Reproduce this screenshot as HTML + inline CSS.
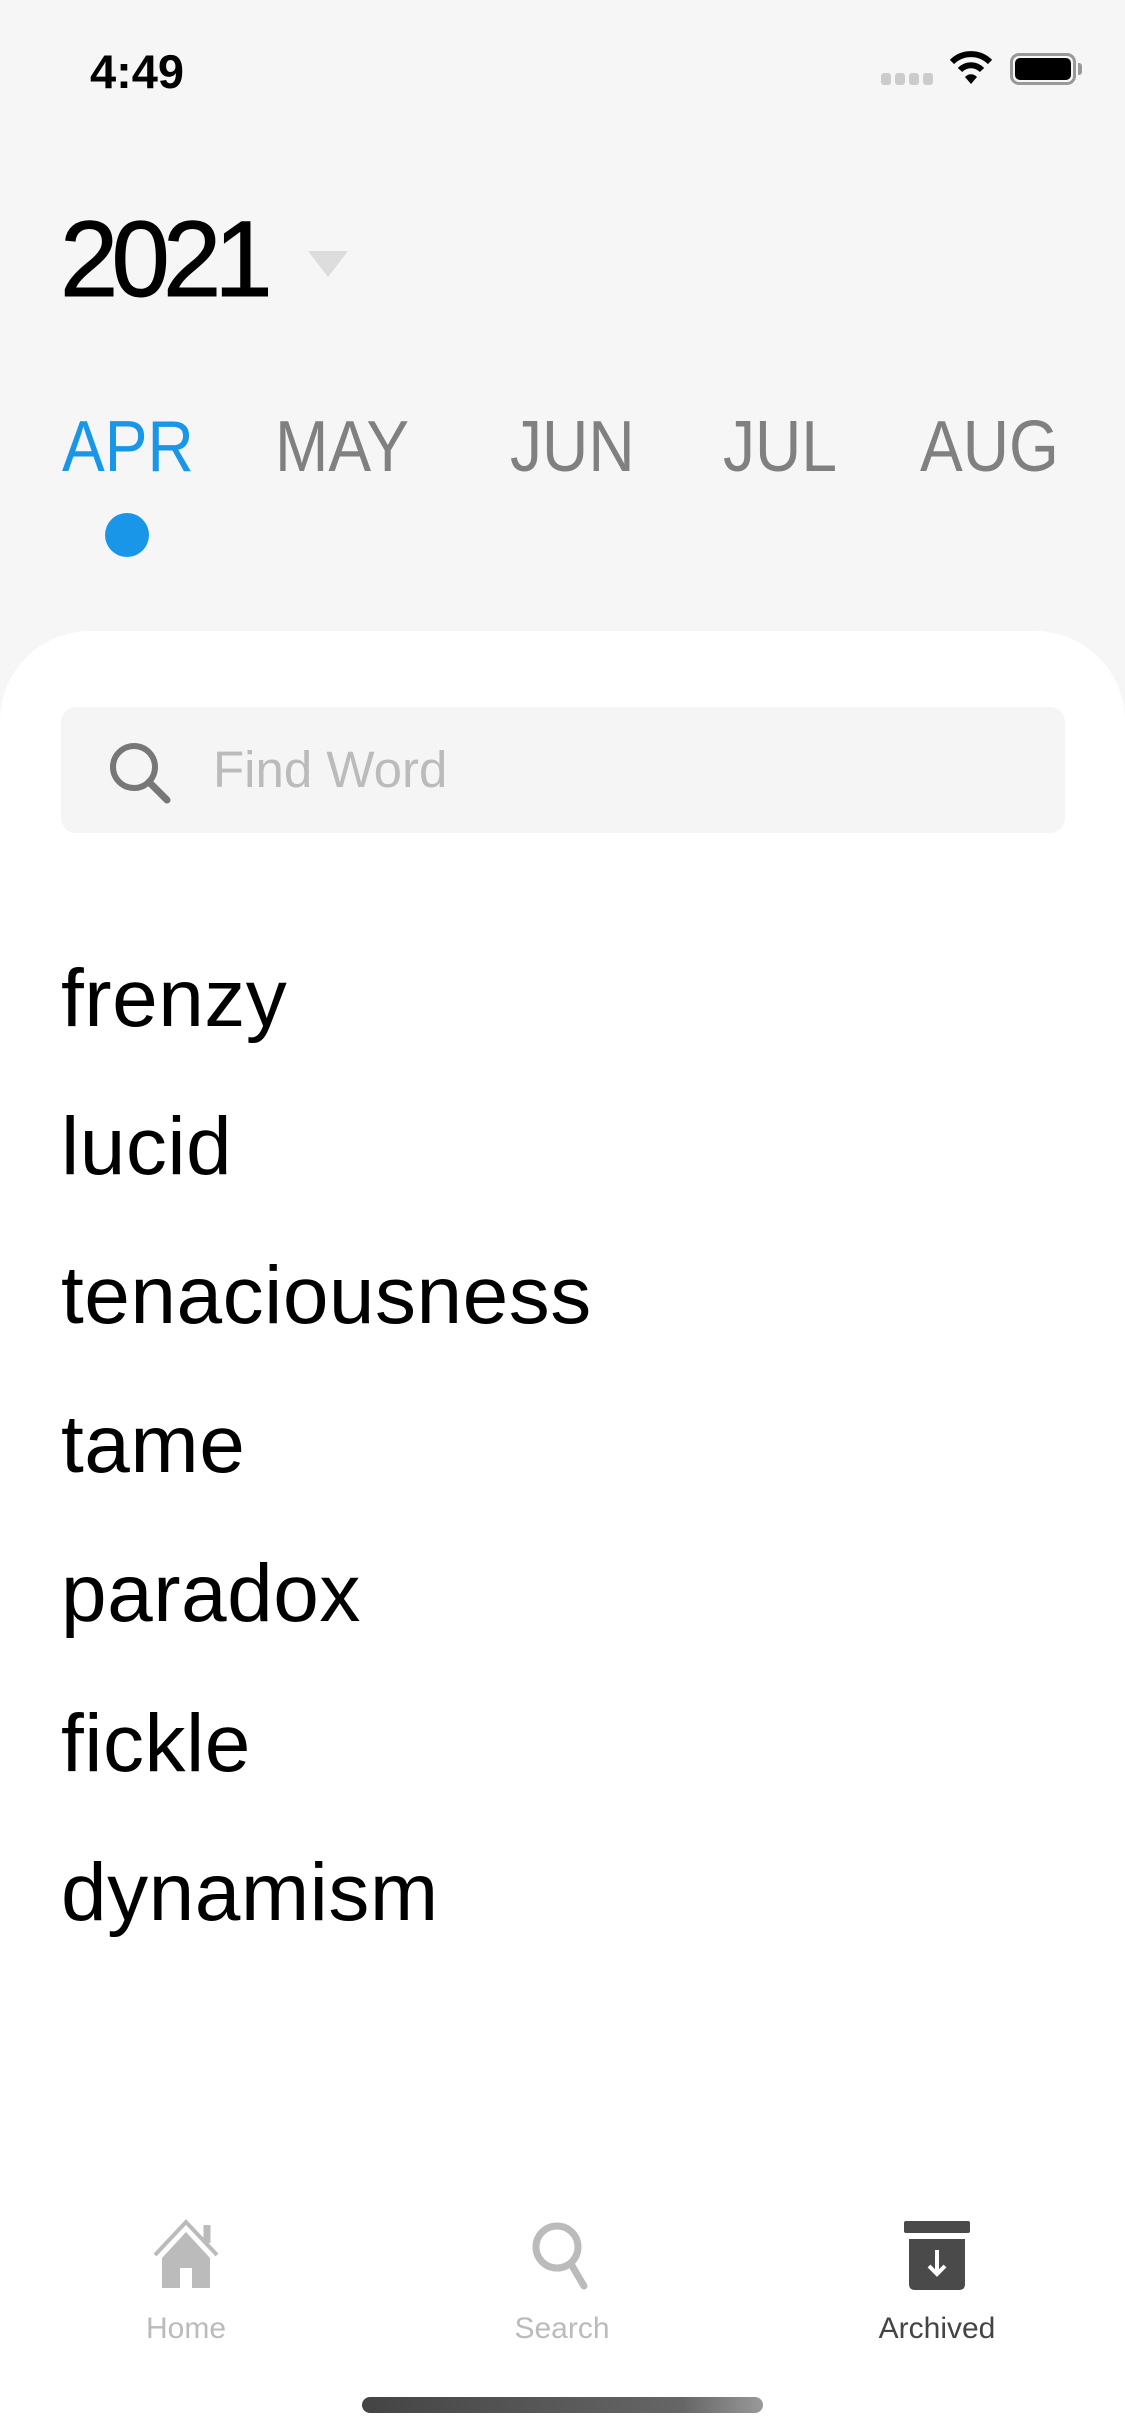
<!DOCTYPE html>
<html><head><meta charset="utf-8"><style>
*{margin:0;padding:0;box-sizing:border-box}
body{width:1125px;height:2436px;background:#f6f6f6;position:relative;overflow:hidden;font-family:"Liberation Sans",sans-serif}
.a{position:absolute}
.m{position:absolute;top:411px;font-size:72px;color:#808080;line-height:72px;transform:scaleX(0.89);transform-origin:left top}
.w{position:absolute;left:61px;font-size:82px;color:#000;line-height:82px;transform:translateY(-50%);letter-spacing:0.5px}
.lbl{position:absolute;top:2312px;font-size:30px;color:#bbb;transform:translateX(-50%)}
</style></head><body>
<div class="a" style="left:90px;top:44px;font-size:47px;font-weight:bold">4:49</div>
<div class="a" style="left:881px;top:73px;width:10px;height:12px;background:#ccc;border-radius:3px"></div>
<div class="a" style="left:895px;top:73px;width:10px;height:12px;background:#ccc;border-radius:3px"></div>
<div class="a" style="left:909px;top:73px;width:10px;height:12px;background:#ccc;border-radius:3px"></div>
<div class="a" style="left:923px;top:73px;width:10px;height:12px;background:#ccc;border-radius:3px"></div>
<svg class="a" style="left:949px;top:50px" width="44" height="36" viewBox="0 0 44 36"><path d="M3 12 A27 27 0 0 1 41 12" stroke="#000" stroke-width="6" fill="none"/><path d="M11 20 A15 15 0 0 1 33 20" stroke="#000" stroke-width="6" fill="none"/><path d="M16 27 L22 34 L28 27 A8 8 0 0 0 16 27Z" fill="#000"/></svg>
<div class="a" style="left:1010px;top:53px;width:66px;height:32px;border:3px solid #999;border-radius:9px"></div>
<div class="a" style="left:1015px;top:58px;width:56px;height:22px;background:#000;border-radius:5px"></div>
<div class="a" style="left:1078px;top:63px;width:4px;height:12px;background:#999;border-radius:0 3px 3px 0"></div>
<div class="a" style="left:60px;top:205px;font-size:108px;line-height:108px;letter-spacing:-7px;color:#000;-webkit-text-stroke:1px #000;transform:scaleX(0.97);transform-origin:left top">2021</div>
<svg class="a" style="left:306px;top:249px" width="44" height="30"><path d="M2 2 H42 L22 28Z" fill="#ddd"/></svg>
<div class="m" style="left:62px;color:#1a96e8">APR</div>
<div class="m" style="left:275px">MAY</div>
<div class="m" style="left:510px">JUN</div>
<div class="m" style="left:723px">JUL</div>
<div class="m" style="left:920px">AUG</div>
<div class="a" style="left:105px;top:513px;width:44px;height:44px;border-radius:50%;background:#1a96e8"></div>
<div class="a" style="left:0;top:631px;width:1125px;height:1805px;background:#fff;border-radius:90px 90px 0 0"></div>
<div class="a" style="left:61px;top:707px;width:1004px;height:126px;background:#f5f5f5;border-radius:15px"></div>
<svg class="a" style="left:107px;top:740px" width="66" height="66" viewBox="0 0 66 66"><circle cx="27" cy="27" r="21" stroke="#777" stroke-width="6" fill="none"/><path d="M42 42 L60 60" stroke="#777" stroke-width="7" stroke-linecap="round"/></svg>
<div class="a" style="left:213px;top:740px;font-size:51px;color:#bbb">Find Word</div>
<div class="w" style="top:999px">frenzy</div>
<div class="w" style="top:1147px">lucid</div>
<div class="w" style="top:1296px">tenaciousness</div>
<div class="w" style="top:1445px">tame</div>
<div class="w" style="top:1594px">paradox</div>
<div class="w" style="top:1744px">fickle</div>
<div class="w" style="top:1893px">dynamism</div>
<svg class="a" style="left:150px;top:2218px" width="72" height="72" viewBox="0 0 72 72"><path d="M5 37 L36 4 L67 37" stroke="#bbb" stroke-width="4" fill="none"/><path d="M57 7 V25" stroke="#bbb" stroke-width="7"/><path d="M12 40 L36 14 L60 40 V70 H42 V50 H30 V70 H12Z" fill="#bbb"/></svg>
<svg class="a" style="left:530px;top:2220px" width="66" height="70" viewBox="0 0 66 70"><circle cx="27" cy="27" r="21" stroke="#bbb" stroke-width="7" fill="none"/><path d="M41 44 L54 66" stroke="#bbb" stroke-width="7" stroke-linecap="round"/></svg>
<svg class="a" style="left:903px;top:2220px" width="68" height="72" viewBox="0 0 68 72"><rect x="1" y="1" width="66" height="12" rx="2" fill="#4a4a4a"/><path d="M6 19 H62 V64 Q62 70 56 70 H12 Q6 70 6 64Z" fill="#4a4a4a"/><path d="M34 30 V53 M26 46 L34 54 L42 46" stroke="#fff" stroke-width="4" fill="none"/></svg>
<div class="lbl" style="left:186px">Home</div>
<div class="lbl" style="left:562px">Search</div>
<div class="lbl" style="left:937px;color:#444">Archived</div>
<div class="a" style="left:362px;top:2397px;width:401px;height:16px;border-radius:8px;background:linear-gradient(90deg,#444,#666 80%,#999)"></div>
</body></html>
